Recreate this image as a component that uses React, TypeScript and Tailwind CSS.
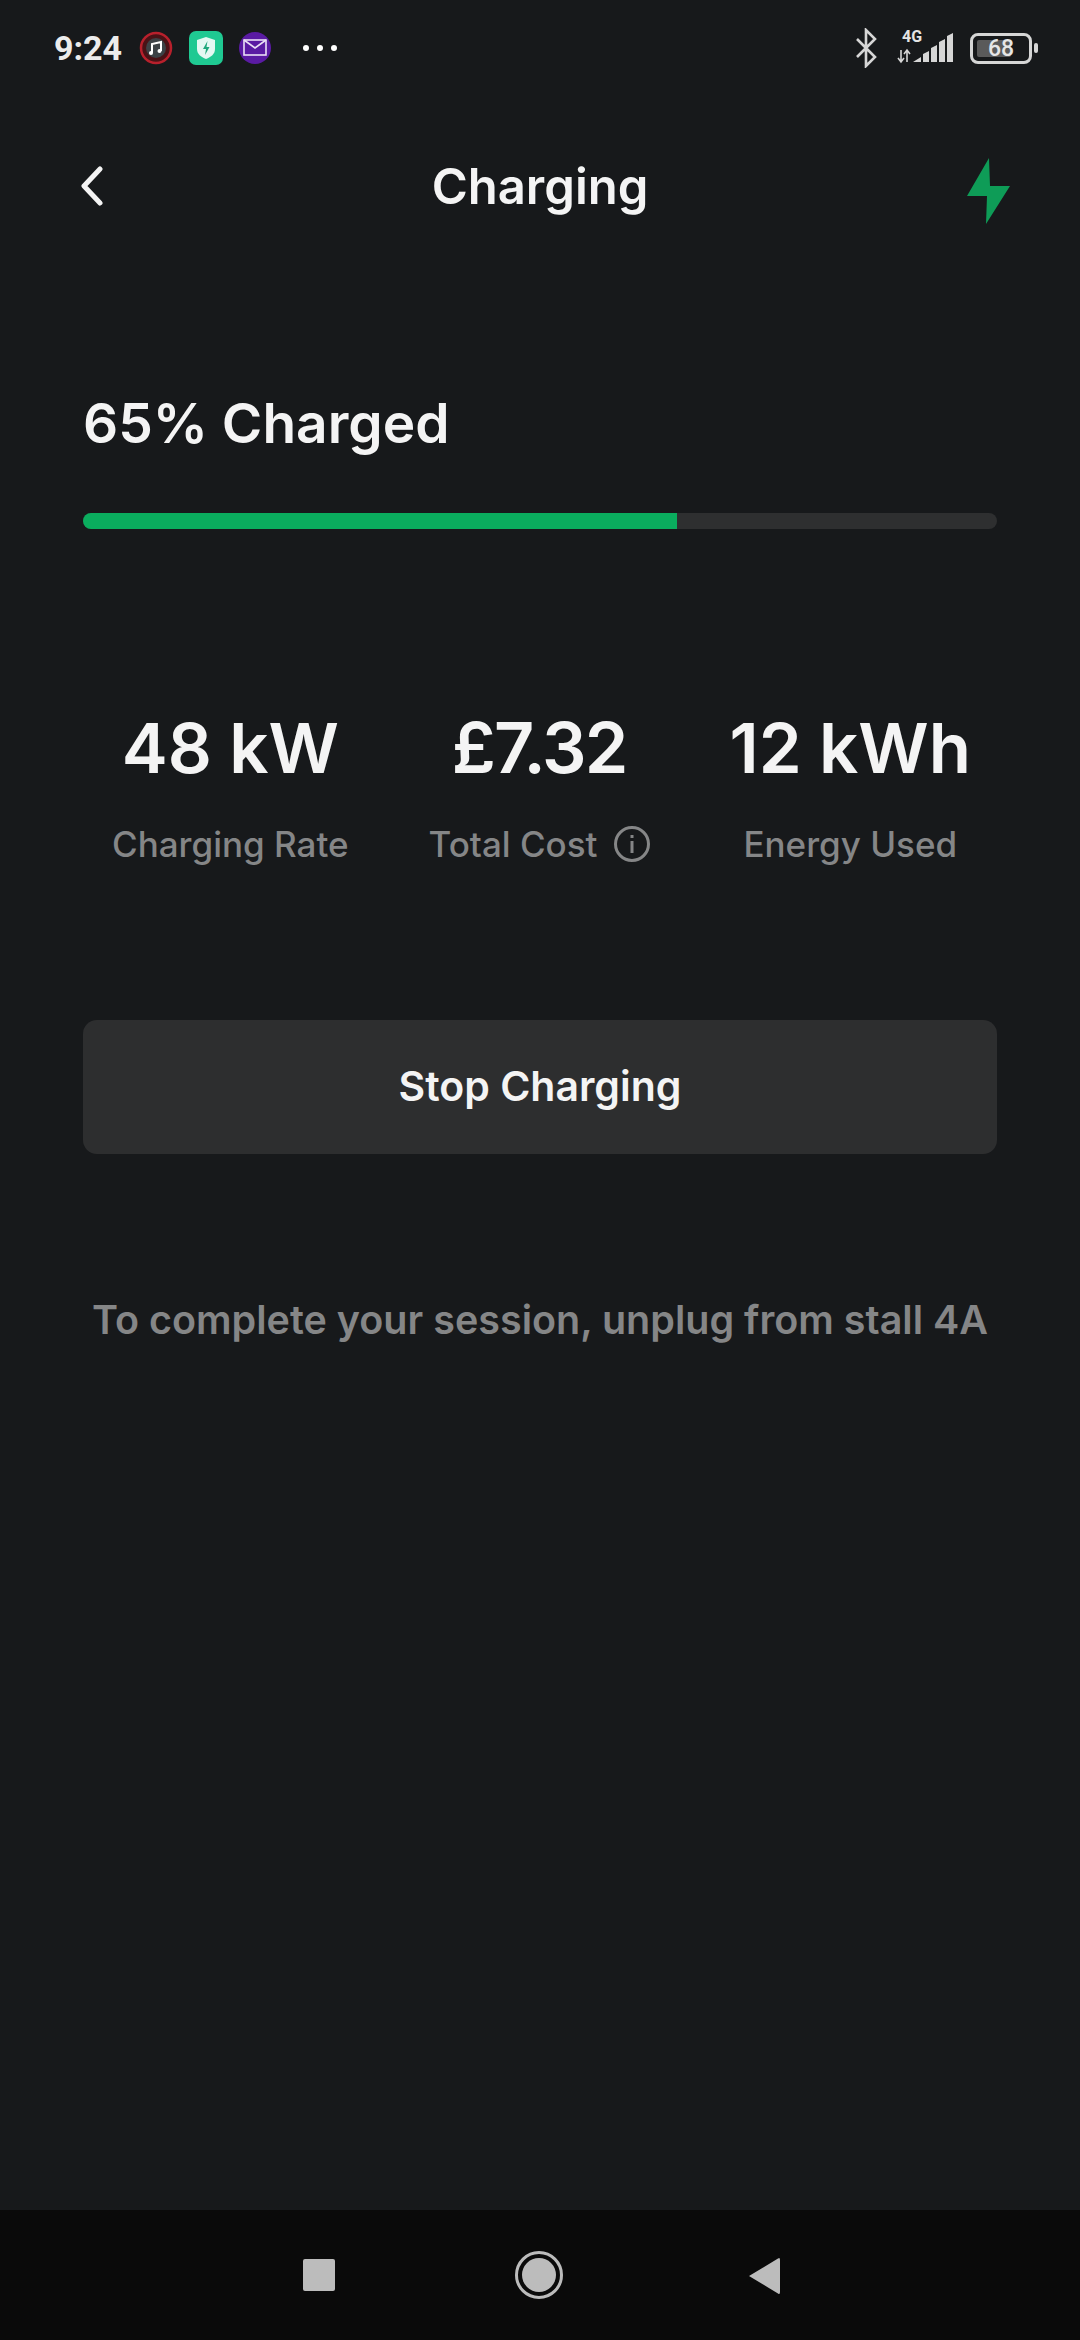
export default function App() {
  return (
    <div className="w-[1080px] h-[2340px] flex flex-col bg-[#17191b] overflow-hidden font-['Inter',sans-serif]">
      <div className="h-[96px] shrink-0 flex items-center justify-between pl-[54px] pr-[42px]">
        <div className="flex items-center">
          <span className="w-[68px] text-[34px] leading-none font-bold text-[#ececec] font-['Roboto',sans-serif]">9:24</span>
          <svg className="ml-[17px]" width="34" height="36" viewBox="0 0 34 36">
            <circle cx="17" cy="18" r="15" fill="#4a1216" stroke="#b8202c" strokeWidth="2.500" />
            <circle cx="17" cy="18" r="10" fill="#3c4246" />
            <path d="M13 23V14l9-2v9" stroke="#fff" strokeWidth="2" fill="none" />
            <circle cx="12" cy="23" r="2" fill="#fff" />
            <circle cx="20.5" cy="21" r="2" fill="#fff" />
          </svg>
          <svg className="ml-[16px]" width="34" height="34" viewBox="0 0 34 34">
            <rect width="34" height="34" rx="7" fill="#1fc992" />
            <path d="M8 9l9-3 9 3v9c0 5-4 8-9 10-5-2-9-5-9-10z" fill="#e4f8f2" />
            <path d="M18.5 10l-4.5 8h3l-1 6 4.5-8h-3z" fill="#1fa87c" />
          </svg>
          <svg className="ml-[15px]" width="34" height="36" viewBox="0 0 34 36">
            <circle cx="17" cy="18" r="16" fill="#5a1ba3" />
            <rect x="6" y="10" width="22" height="15" fill="none" stroke="#e9dff5" strokeWidth="1.6" />
            <path d="M6 10l11 8 11-8" fill="none" stroke="#e9dff5" strokeWidth="1.6" />
          </svg>
          <div className="ml-[31px] flex gap-[8px]">
            <span className="w-[6px] h-[6px] rounded-full bg-white" />
            <span className="w-[6px] h-[6px] rounded-full bg-white" />
            <span className="w-[6px] h-[6px] rounded-full bg-white" />
          </div>
        </div>
        <div className="flex items-center">
          <svg width="22" height="40" viewBox="0 0 22 40">
            <path d="M2 11l18 18-9 9V2l9 9L2 29" fill="none" stroke="#d6d6d6" strokeWidth="2.6" />
          </svg>
          <div className="relative ml-[20px] w-[60px] h-[34px]">
            <span className="absolute left-[5px] top-[-2px] text-[16px] leading-[16px] font-bold text-[#e4e4e4] font-['Roboto',sans-serif]">4G</span>
            <svg className="absolute left-0 top-0" width="60" height="34" viewBox="0 0 60 34">
              <path d="M4 19v12M1 27l3 4 3-4M10 31V19M7 23l3-4 3 4" stroke="#d6d6d6" strokeWidth="1.6" fill="none" />
              <path d="M16 31l8-5v5zM26 31v-8l6-3v11zM34 31v-14l6-3v17zM42 31v-20l6-3v23zM50 31v-26l6-3v29z" fill="#d6d6d6" />
            </svg>
          </div>
          <div className="ml-[13px] w-[62px] h-[31px] border-[3px] border-[#d6d6d6] rounded-[8px] relative flex items-center justify-center">
            <div className="absolute left-[4px] top-[4px] bottom-[4px] w-[34px] bg-[#5a5a5a] rounded-[2px]" />
            <span className="relative text-[23px] leading-none font-medium text-[#e6e6e6] font-['Roboto',sans-serif]">68</span>
          </div>
          <div className="ml-[2px] w-[4px] h-[10px] bg-[#d6d6d6] rounded-[2px]" />
        </div>
      </div>

      <div className="relative h-[182px] shrink-0 flex items-center justify-center">
        <svg className="absolute left-[80px] top-[70px]" width="24" height="40" viewBox="0 0 24 40">
          <path d="M20 3L4 20l16 17" fill="none" stroke="#f4f4f4" strokeWidth="5" strokeLinecap="round" strokeLinejoin="round" />
        </svg>
        <h1 className="text-[49px] leading-none font-semibold text-[#f4f4f4] -mt-[2px]">Charging</h1>
        <svg className="absolute left-[966px] top-[62px]" width="45" height="66" viewBox="0 0 45 66">
          <path d="M23 0L1 38h20l-1 28 24-38H24z" fill="#0e9c57" />
        </svg>
      </div>

      <div className="px-[83px] flex flex-col">
        <h2 className="mt-[115px] text-[55px] leading-[60px] font-semibold text-[#f4f4f4]">65% Charged</h2>
        <div className="mt-[60px] h-[16px] rounded-full bg-[#2e2f30] overflow-hidden">
          <div className="h-full w-[65%] bg-[#0aad5e]" />
        </div>

        <div className="mt-[179px] flex justify-between pl-[29px] pr-[26px]">
          <div className="flex flex-col items-center">
            <span className="text-[69px] leading-[80px] font-semibold text-[#f4f4f4]">48 kW</span>
            <span className="mt-[36px] text-[35px] leading-[40px] font-medium text-[#858687]">Charging Rate</span>
          </div>
          <div className="flex flex-col items-center">
            <span className="text-[70px] leading-[80px] font-semibold text-[#f4f4f4] tracking-[-2px]">£7.32</span>
            <div className="mt-[36px] flex items-center gap-[16px]">
              <span className="text-[35px] leading-[40px] font-medium text-[#858687]">Total Cost</span>
              <svg width="36" height="36" viewBox="0 0 36 36">
                <circle cx="18" cy="18" r="16.5" fill="none" stroke="#858687" strokeWidth="3" />
                <rect x="16.5" y="15" width="3" height="12" fill="#858687" />
                <rect x="16.5" y="9" width="3" height="3" fill="#858687" />
              </svg>
            </div>
          </div>
          <div className="flex flex-col items-center">
            <span className="text-[69px] leading-[80px] font-semibold text-[#f4f4f4]">12 kWh</span>
            <span className="mt-[36px] text-[35px] leading-[40px] font-medium text-[#858687]">Energy Used</span>
          </div>
        </div>

        <button className="mt-[156px] h-[134px] rounded-[14px] bg-[#2d2e2f] text-[41px] font-semibold text-[#f4f4f4]">Stop Charging</button>
        <p className="mt-[126px] text-center text-[39.5px] leading-[80px] font-semibold text-[#858687] whitespace-nowrap">To complete your session, unplug from stall 4A</p>
      </div>

      <div className="mt-auto h-[130px] bg-[#0a0a0a] relative flex items-center justify-center shrink-0">
        <div className="absolute left-[303px] top-[49px] w-[32px] h-[32px] rounded-[2px] bg-[#bcbcbc]" />
        <svg className="absolute left-[515px] top-[41px]" width="48" height="48" viewBox="0 0 48 48">
          <circle cx="24" cy="24" r="22.5" fill="none" stroke="#bcbcbc" strokeWidth="3" />
          <circle cx="24" cy="24" r="17" fill="#bcbcbc" />
        </svg>
        <svg className="absolute left-[748px] top-[47px]" width="32" height="38" viewBox="0 0 32 38">
          <path d="M1 19L30 1.500Q32 0 32 3v32q0 3-2 1.500z" fill="#bcbcbc" />
        </svg>
      </div>
    </div>
  );
}
